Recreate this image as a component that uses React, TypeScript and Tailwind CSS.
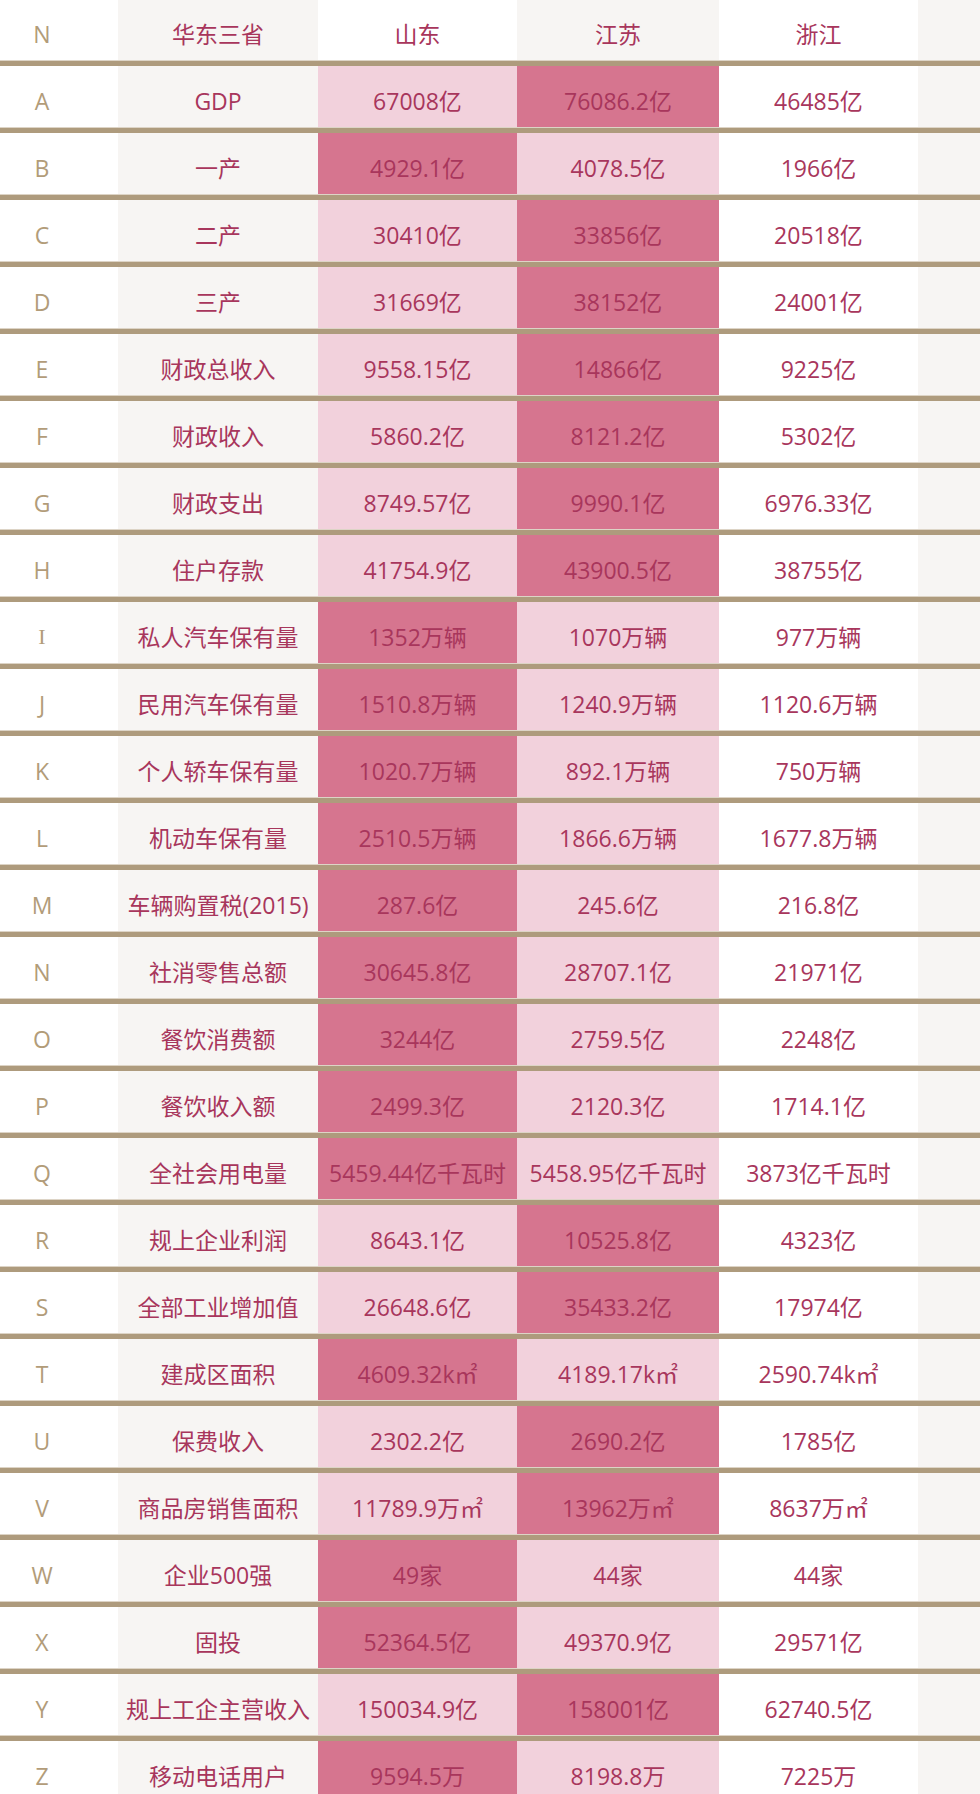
import React from "react";

type Row = [string, string, string, string, string, "L" | "D"];
// last field: state of 山东 column: L = light pink (江苏 dark), D = dark (江苏 light)

const rows: Row[] = [
  ["A", "GDP", "67008亿", "76086.2亿", "46485亿", "L"],
  ["B", "一产", "4929.1亿", "4078.5亿", "1966亿", "D"],
  ["C", "二产", "30410亿", "33856亿", "20518亿", "L"],
  ["D", "三产", "31669亿", "38152亿", "24001亿", "L"],
  ["E", "财政总收入", "9558.15亿", "14866亿", "9225亿", "L"],
  ["F", "财政收入", "5860.2亿", "8121.2亿", "5302亿", "L"],
  ["G", "财政支出", "8749.57亿", "9990.1亿", "6976.33亿", "L"],
  ["H", "住户存款", "41754.9亿", "43900.5亿", "38755亿", "L"],
  ["I", "私人汽车保有量", "1352万辆", "1070万辆", "977万辆", "D"],
  ["J", "民用汽车保有量", "1510.8万辆", "1240.9万辆", "1120.6万辆", "D"],
  ["K", "个人轿车保有量", "1020.7万辆", "892.1万辆", "750万辆", "D"],
  ["L", "机动车保有量", "2510.5万辆", "1866.6万辆", "1677.8万辆", "D"],
  ["M", "车辆购置税(2015)", "287.6亿", "245.6亿", "216.8亿", "D"],
  ["N", "社消零售总额", "30645.8亿", "28707.1亿", "21971亿", "D"],
  ["O", "餐饮消费额", "3244亿", "2759.5亿", "2248亿", "D"],
  ["P", "餐饮收入额", "2499.3亿", "2120.3亿", "1714.1亿", "D"],
  ["Q", "全社会用电量", "5459.44亿千瓦时", "5458.95亿千瓦时", "3873亿千瓦时", "D"],
  ["R", "规上企业利润", "8643.1亿", "10525.8亿", "4323亿", "L"],
  ["S", "全部工业增加值", "26648.6亿", "35433.2亿", "17974亿", "L"],
  ["T", "建成区面积", "4609.32k㎡", "4189.17k㎡", "2590.74k㎡", "D"],
  ["U", "保费收入", "2302.2亿", "2690.2亿", "1785亿", "L"],
  ["V", "商品房销售面积", "11789.9万㎡", "13962万㎡", "8637万㎡", "L"],
  ["W", "企业500强", "49家", "44家", "44家", "D"],
  ["X", "固投", "52364.5亿", "49370.9亿", "29571亿", "D"],
  ["Y", "规上工企主营收入", "150034.9亿", "158001亿", "62740.5亿", "L"],
  ["Z", "移动电话用户", "9594.5万", "8198.8万", "7225万", "D"],
];

const LIGHT = "bg-[#f2d1dc]";
const DARK = "bg-[#d6758f]";

function Sep() {
  return (
    <div className="w-full">
      <div className="h-[1px] bg-[#ddd4c6]" />
      <div className="h-[5px] bg-[#ae9b7d]" />
    </div>
  );
}

function Cells({
  n,
  name,
  sd,
  js,
  zj,
  sdBg,
  jsBg,
  h,
}: {
  n: string;
  name: string;
  sd: string;
  js: string;
  zj: string;
  sdBg: string;
  jsBg: string;
  h: string;
}) {
  const cell = "flex items-center justify-center pt-[9px] whitespace-nowrap";
  return (
    <div className={`flex ${h} text-[23px] text-[#a8365c]`}>
      <div className="w-[118px] bg-white flex items-center pt-[9px]">
        <div
          className={`w-[84px] text-center text-[#b29c79] ${
            n === "I" ? "font-['Liberation_Serif'] text-[22px]" : ""
          }`}
        >
          {n}
        </div>
      </div>
      <div className={`w-[200px] bg-[#f7f5f3] ${cell}`}>{name}</div>
      <div className={`w-[199px] ${sdBg} ${cell}`}>{sd}</div>
      <div className={`w-[202px] ${jsBg} ${cell}`}>{js}</div>
      <div className={`w-[199px] bg-white ${cell}`}>{zj}</div>
      <div className="flex-1 bg-[#f7f5f3]" />
    </div>
  );
}

export default function App() {
  return (
    <div
      className="w-[980px] bg-white leading-none"
      style={{ fontFamily: '"Open Sans", "Noto Sans CJK SC", sans-serif' }}
    >
      <Cells
        n="N"
        name="华东三省"
        sd="山东"
        js="江苏"
        zj="浙江"
        sdBg="bg-white"
        jsBg="bg-[#f7f5f3]"
        h="h-[60px]"
      />
      {rows.map((r) => (
        <div key={r[0]}>
          <Sep />
          <Cells
            n={r[0]}
            name={r[1]}
            sd={r[2]}
            js={r[3]}
            zj={r[4]}
            sdBg={r[5] === "L" ? LIGHT : DARK}
            jsBg={r[5] === "L" ? DARK : LIGHT}
            h="h-[61px]"
          />
        </div>
      ))}
    </div>
  );
}
